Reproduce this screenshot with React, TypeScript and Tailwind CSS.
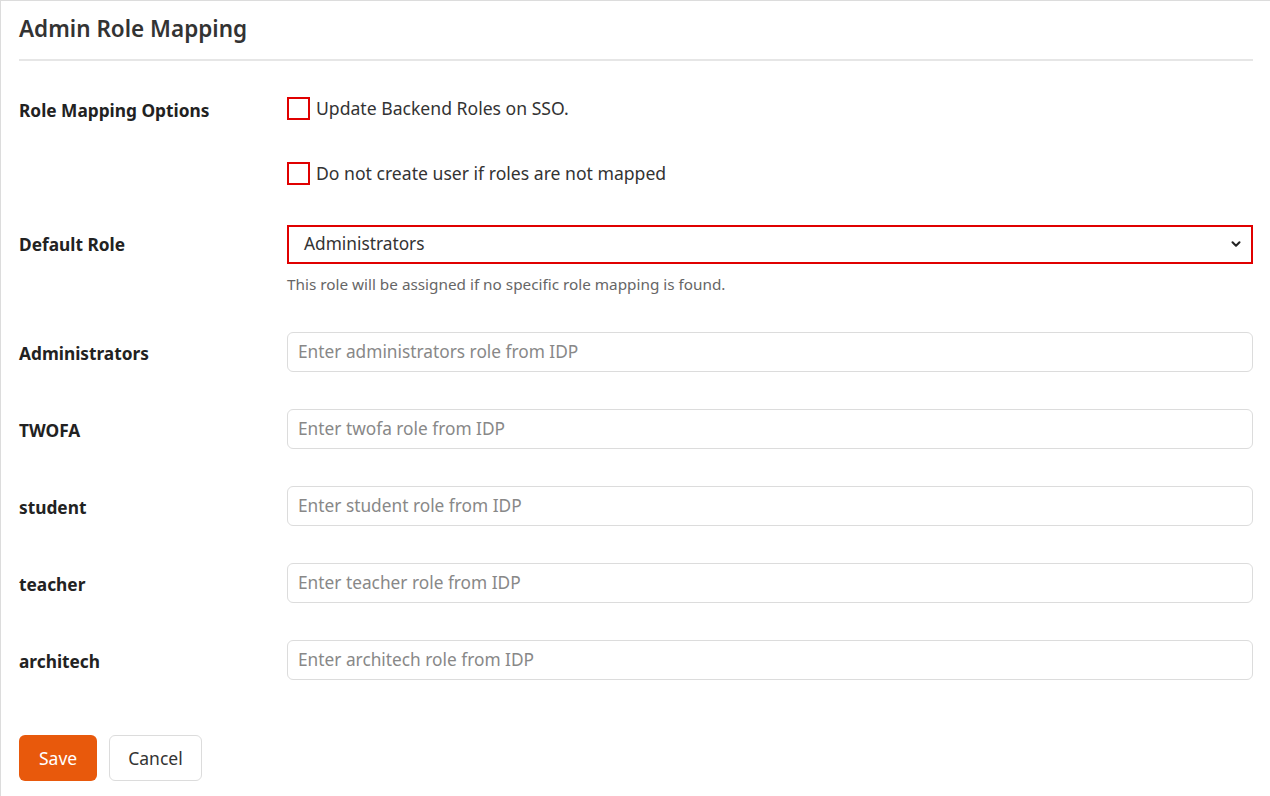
import { ChevronDown } from "lucide-react";

const roles = ["Administrators", "TWOFA", "student", "teacher", "architech"];

function Checkbox({ label }: { label: string }) {
  return (
    <label className="flex items-center gap-[6px] text-[17.6px] text-[#333]">
      <span className="block w-[23px] h-[23px] border-2 border-[#e00000] bg-white" />
      {label}
    </label>
  );
}

export default function App() {
  return (
    <div
      className="min-h-[796px] bg-white border-l border-t border-[#dcdcdc] pl-[18px] pr-[17px]"
      style={{ fontFamily: '"Noto Sans", "Open Sans", sans-serif' }}
    >
      <div className="h-[60px] border-b-2 border-[#e6e6e6] flex items-center">
        <h1 className="text-[22.5px] font-semibold text-[#333] -mt-[3px]">Admin Role Mapping</h1>
      </div>

      <div className="flex mt-[34px]">
        <div className="w-[268px] pt-[3px] text-[17.3px] font-bold text-[#222]">Role Mapping Options</div>
        <div className="flex flex-col gap-[39px]">
          <Checkbox label="Update Backend Roles on SSO." />
          <Checkbox label="Do not create user if roles are not mapped" />
        </div>
      </div>

      <div className="flex mt-[38px]">
        <div className="w-[268px] h-[40px] flex items-center text-[17.3px] font-bold text-[#222]">Default Role</div>
        <div className="flex-1">
          <div className="h-[39px] border-2 border-[#e00000] flex items-center justify-between pl-[15px] pr-[8px] text-[17.3px] text-[#333]">
            <span>Administrators</span>
            <ChevronDown className="w-[14px] h-[14px] text-[#222]" strokeWidth={3.5} />
          </div>
          <p className="mt-[9px] text-[15.3px] text-[#666]">
            This role will be assigned if no specific role mapping is found.
          </p>
        </div>
      </div>

      <div className="flex flex-col gap-[37px] mt-[36px]">
        {roles.map((r) => (
          <div key={r} className="flex items-center">
            <div className="w-[268px] pt-[4px] text-[17.3px] font-bold text-[#222]">{r}</div>
            <input
              className="flex-1 h-[40px] border border-[#dcdcdc] rounded-[6px] px-[10px] text-[17.3px] text-[#333] placeholder:text-[#888] outline-none"
              placeholder={`Enter ${r.toLowerCase()} role from IDP`}
            />
          </div>
        ))}
      </div>

      <div className="flex gap-[12px] mt-[55px]">
        <button className="h-[46px] px-[20px] rounded-[6px] bg-[#e8590c] text-white text-[17.5px]">Save</button>
        <button className="h-[46px] px-[18px] rounded-[6px] border border-[#dcdcdc] bg-white text-[#333] text-[17.5px]">
          Cancel
        </button>
      </div>
    </div>
  );
}
